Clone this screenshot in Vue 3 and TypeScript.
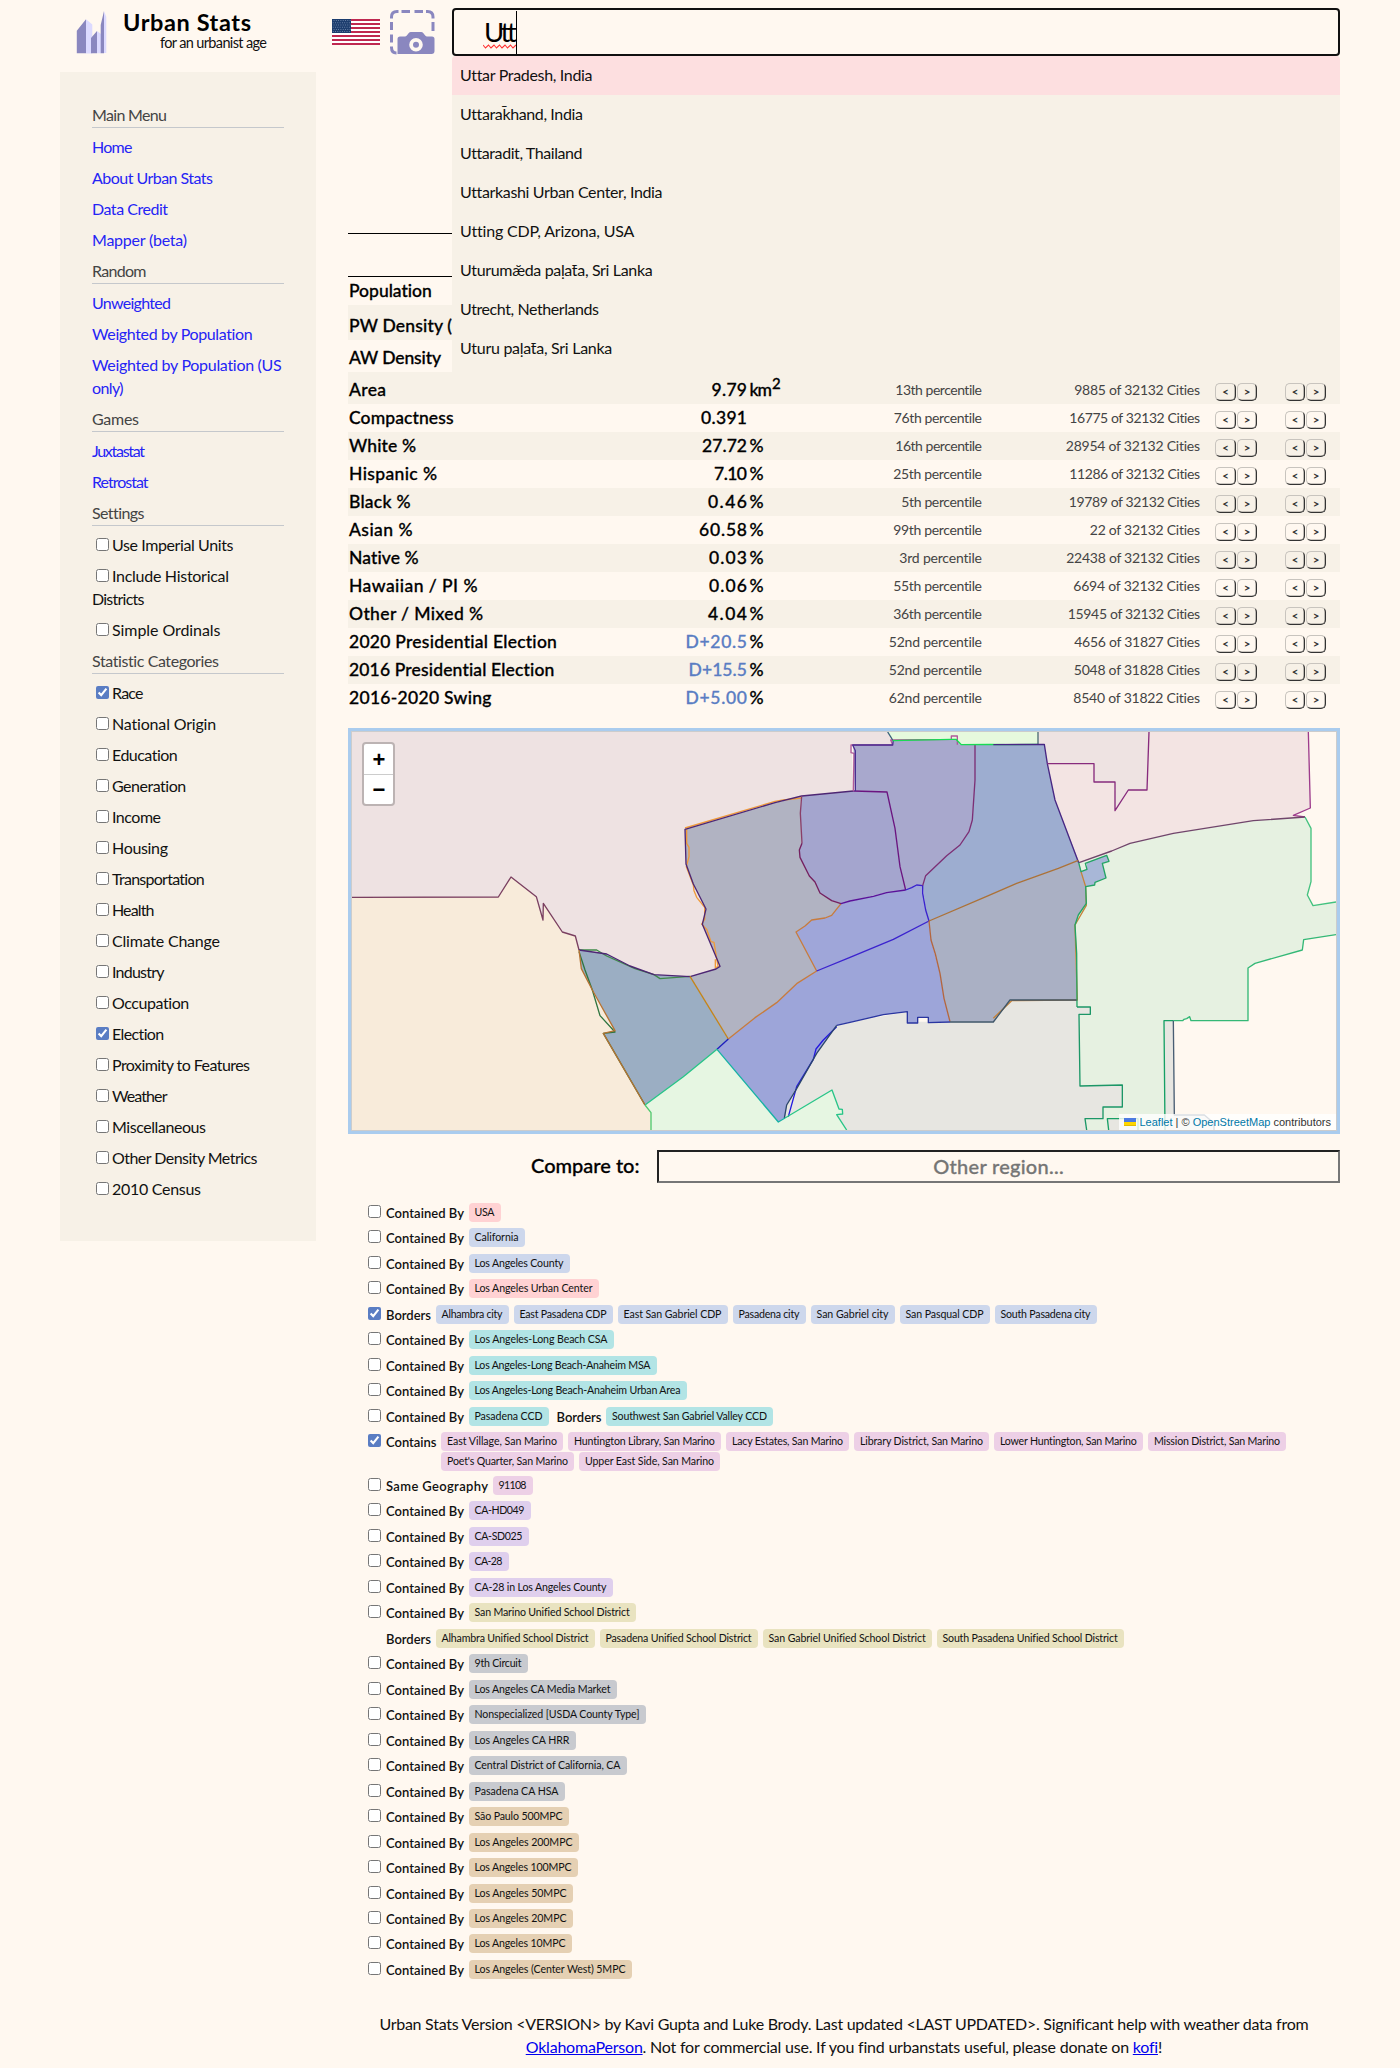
<script setup lang="ts">
import type { Directive } from 'vue'

// Tunes the tracking of a label so that it takes up the given width in pixels.
const vFit: Directive<HTMLElement, number> = {
  mounted(el, binding) {
    const natural = el.getBoundingClientRect().width
    const count = (el.textContent ?? '').trim().length
    if (!binding.value || count < 2) return
    const step = (binding.value - natural) / (count - 1)
    el.style.letterSpacing = `${step.toFixed(3)}px`
    el.style.marginRight = `${(-step).toFixed(3)}px`
  },
}

type Label = [text: string, width: number]
interface Section { title: Label; links?: Label[][]; checks?: { lines: Label[]; on?: boolean }[] }

const check = (text: string, width: number, on = false) => ({ lines: [[text, width]] as Label[], on })

const sections: Section[] = [
  { title: ['Main Menu', 75], links: [[['Home', 40.5]], [['About Urban Stats', 121]], [['Data Credit', 76]], [['Mapper (beta)', 95]]] },
  { title: ['Random', 54.5], links: [[['Unweighted', 79]], [['Weighted by Population', 161]], [['Weighted by Population (US', 190], ['only)', 31.5]]] },
  { title: ['Games', 47], links: [[['Juxtastat', 53]], [['Retrostat', 56.5]]] },
  {
    title: ['Settings', 52],
    checks: [check('Use Imperial Units', 121.5), { lines: [['Include Historical', 117], ['Districts', 52.5]] }, check('Simple Ordinals', 108.5)],
  },
  {
    title: ['Statistic Categories', 127.5],
    checks: [
      check('Race', 31.5, true), check('National Origin', 104.5), check('Education', 66), check('Generation', 74.5),
      check('Income', 49), check('Housing', 56), check('Transportation', 93), check('Health', 42.5),
      check('Climate Change', 108), check('Industry', 52.5), check('Occupation', 77.5), check('Election', 52.5, true),
      check('Proximity to Features', 138), check('Weather', 55.5), check('Miscellaneous', 94),
      check('Other Density Metrics', 145.5), check('2010 Census', 89),
    ],
  },
]

const suggestions: Label[] = [
  ['Uttar Pradesh, India', 132], ['Uttarak\u0304hand, India', 122], ['Uttaradit, Thailand', 122],
  ['Uttarkashi Urban Center, India', 202], ['Utting CDP, Arizona, USA', 174],
  ['Uturumæ\u0306da paḷat\u0304a, Sri Lanka', 192], ['Utrecht, Netherlands', 139], ['Uturu paḷat\u0304a, Sri Lanka', 152],
]

interface Stat { name: Label; value: Label; unit: string; pct: Label; rank: Label; dem?: boolean; h?: number }
const stat = (n: string, nw: number, v: string, vw: number, unit: string, p: string, pw: number, r: string, rw: number): Stat => ({
  name: [n, nw], value: [v, vw], unit, pct: [`${p} percentile`, pw], rank: [`${r} Cities`, rw], dem: v.startsWith('D+'), h: unit === 'km' ? 32 : 28,
})
const stats: Stat[] = [
  stat('Area', 37, '9.79', 35.5, 'km', '13th', 87, '9885 of 32132', 126),
  stat('Compactness', 104.5, '0.391', 46, '', '76th', 88.5, '16775 of 32132', 131),
  stat('White %', 67, '27.72', 45, '%', '16th', 87, '28954 of 32132', 134.5),
  stat('Hispanic %', 88, '7.10', 33, '%', '25th', 89, '11286 of 32132', 131),
  stat('Black %', 61.5, '0.46', 39, '%', '5th', 81, '19789 of 32132', 131.5),
  stat('Asian %', 63.5, '60.58', 48, '%', '99th', 89, '22 of 32132', 110.5),
  stat('Native %', 70, '0.03', 38, '%', '3rd', 83, '22438 of 32132', 134),
  stat('Hawaiian / PI %', 128.5, '0.06', 38, '%', '55th', 89, '6694 of 32132', 127),
  stat('Other / Mixed %', 134, '4.04', 39, '%', '36th', 89, '15945 of 32132', 132.5),
  stat('2020 Presidential Election', 208.5, 'D+20.5', 61.5, '%', '52nd', 93.5, '4656 of 31827', 126),
  stat('2016 Presidential Election', 206, 'D+15.5', 58.5, '%', '52nd', 93.5, '5048 of 31828', 126.5),
  stat('2016-2020 Swing', 142.5, 'D+5.00', 61.5, '%', '62nd', 93.5, '8540 of 31822', 127),
]

type Tone = 'red' | 'blue' | 'teal' | 'pink' | 'purple' | 'olive' | 'gray' | 'tan'
interface Group { label: Label; chips: Label[] }
interface Related { tone: Tone[]; groups: Group[]; on?: boolean; bare?: boolean; tall?: boolean }
const BY: Label = ['Contained By', 78]
const BORDERS: Label = ['Borders', 45]
const by = (tone: Tone, text: string, width: number): Related => ({ tone: [tone], groups: [{ label: BY, chips: [[text, width]] }] })

const related: Related[] = [
  by('red', 'USA', 32), by('blue', 'California', 56), by('blue', 'Los Angeles County', 101), by('red', 'Los Angeles Urban Center', 130),
  {
    tone: ['blue'], on: true,
    groups: [{ label: BORDERS, chips: [['Alhambra city', 73], ['East Pasadena CDP', 99], ['East San Gabriel CDP', 110], ['Pasadena city', 73], ['San Gabriel city', 84], ['San Pasqual CDP', 90], ['South Pasadena city', 102]] }],
  },
  by('teal', 'Los Angeles-Long Beach CSA', 145), by('teal', 'Los Angeles-Long Beach-Anaheim MSA', 188),
  by('teal', 'Los Angeles-Long Beach-Anaheim Urban Area', 218),
  { tone: ['teal'], groups: [{ label: BY, chips: [['Pasadena CCD', 80]] }, { label: BORDERS, chips: [['Southwest San Gabriel Valley CCD', 167]] }] },
  {
    tone: ['pink'], on: true, tall: true,
    groups: [{ label: ['Contains', 50.5], chips: [['East Village, San Marino', 122], ['Huntington Library, San Marino', 153], ['Lacy Estates, San Marino', 123], ['Library District, San Marino', 135], ['Lower Huntington, San Marino', 149], ['Mission District, San Marino', 138], ["Poet's Quarter, San Marino", 133], ['Upper East Side, San Marino', 141]] }],
  },
  { tone: ['pink'], groups: [{ label: ['Same Geography', 102], chips: [['91108', 40]] }] },
  by('purple', 'CA-HD049', 62), by('purple', 'CA-SD025', 60), by('purple', 'CA-28', 40), by('purple', 'CA-28 in Los Angeles County', 144),
  by('olive', 'San Marino Unified School District', 167),
  {
    tone: ['olive'], bare: true,
    groups: [{ label: BORDERS, chips: [['Alhambra Unified School District', 159], ['Pasadena Unified School District', 158], ['San Gabriel Unified School District', 169], ['South Pasadena Unified School District', 187]] }],
  },
  by('gray', '9th Circuit', 59), by('gray', 'Los Angeles CA Media Market', 148), by('gray', 'Nonspecialized [USDA County Type]', 177),
  by('gray', 'Los Angeles CA HRR', 107), by('gray', 'Central District of California, CA', 158), by('gray', 'Pasadena CA HSA', 96),
  by('tan', 'São Paulo 500MPC', 100), by('tan', 'Los Angeles 200MPC', 110), by('tan', 'Los Angeles 100MPC', 109),
  by('tan', 'Los Angeles 50MPC', 104), by('tan', 'Los Angeles 20MPC', 104), by('tan', 'Los Angeles 10MPC', 103),
  by('tan', 'Los Angeles (Center West) 5MPC', 163),
]

// Regions of the map: fill colour and outline.
const regions: [string, string][] = [
  ['#eee2e2', '36,36 1643,36 1658,60 1658,75 1535,75 1540,213 1385,228 1305,248 1035,328 1038,432 1060,492 1098,567 1087,613 1140,739 1128,747 1050,769 942,764 870,738 800,702 717,690 706,648 667,636 610,550 609,600 589,530 513,471 475,531 36,532'],
  ['#f8ebda', '36,532 475,531 513,471 589,530 609,600 610,550 667,636 706,648 717,690 724,746 825,932 790,940 915,1155 933,1178 933,1230 36,1230'],
  ['#e6f6e2', '1131,988 1315,1206 1335,1194 1476,1110 1497,1167 1507,1168 1508,1182 1490,1184 1520,1230 933,1230 933,1178 915,1155'],
  ['#e7e6e1', '1490,916 1530,907 1702,875 1702,905 1960,905 2010,840 2210,840 2211,861 2251,861 2251,883 2217,883 2220,1098 2347,1095 2347,1161 2289,1161 2289,1196 2235,1196 2240,1230 1520,1230 1490,1184 1508,1182 1505,1167 1497,1165 1476,1110 1335,1192 1340,1155 1370,1100 1430,1000'],
  ['#e6f9dd', '1643,36 1658,60 1850,57 1860,74 2094,74 2094,36'],
  ['#eee3e2', '2094,36 2094,72 2113,73 2122,131 2262,131 2262,186 2325,186 2325,272 2365,210 2421,210 2427,36'],
  ['#f3e4e3', '2427,36 2905,36 2911,264 2860,286 2895,291 2740,302 2500,340 2370,370 2315,397 2217,428 2145,240 2122,131 2262,131 2262,186 2325,186 2325,272 2365,210 2421,210'],
  ['#e6f1e1', '2217,428 2315,397 2370,370 2500,340 2740,302 2895,291 2913,325 2913,485 2902,525 2919,557 2988,546 2988,644 2891,659 2887,690 2745,730 2724,744 2724,902 2553,902 2549,890 2540,896 2532,898 2528,902 2472,902 2475,1230 2240,1230 2235,1196 2289,1196 2289,1161 2347,1161 2347,1095 2220,1098 2217,883 2251,883 2251,861 2211,861 2205,615'],
  ['#e7e6e1', '2472,902 2500,902 2503,1185 2593,1185 2622,1210 2622,1230 2475,1230'],
  ['#e7e6e1', '2302,1196 2394,1196 2394,1230 2306,1230'],
  ['#9baec3', '717,690 800,702 870,738 942,764 1050,769 1165,957 1131,988 1030,1070 915,1155 790,940 825,932 724,746'],
  ['#b1b3c2', '1035,328 1305,248 1383,232 1381,280 1386,370 1378,390 1380,412 1408,468 1425,486 1440,519 1475,542 1503,551 1475,586 1455,594 1415,600 1395,618 1368,636 1430,753 1370,791 1310,848 1245,893 1165,957 1050,769 1128,747 1140,739 1087,613 1098,567 1060,492 1038,432'],
  ['#a4a5ce', '1385,228 1540,213 1641,216 1665,325 1680,440 1697,510 1640,518 1600,527 1503,551 1475,542 1440,519 1425,486 1408,468 1380,412 1378,390 1386,370 1381,280'],
  ['#a8a8cd', '1540,75 1658,75 1658,60 1830,58 1850,57 1860,74 1905,74 1905,180 1897,300 1887,335 1860,375 1820,407 1757,467 1748,497 1730,495 1715,503 1697,510 1680,440 1665,325 1641,216 1545,213'],
  ['#9dadd0', '1905,74 2113,73 2122,131 2145,240 2215,421 2155,445 2030,490 1940,529 1767,603 1757,570 1748,497 1757,467 1820,407 1860,375 1887,335 1897,300 1905,180'],
  ['#9fa6d9', '1503,551 1600,527 1640,518 1697,510 1730,495 1748,497 1757,570 1767,603 1660,658 1530,712 1430,753 1368,636 1395,618 1415,600 1455,594 1475,586'],
  ['#9da5d9', '1430,753 1530,712 1660,658 1767,603 1773,660 1800,760 1812,835 1830,905 1765,907 1765,892 1733,892 1733,909 1702,909 1702,875 1630,884 1530,907 1490,916 1430,1000 1370,1100 1340,1155 1335,1192 1315,1206 1131,988 1165,957 1245,893 1310,848 1370,791'],
  ['#aab0c4', '1767,603 1940,529 2030,490 2155,445 2215,421 2237,500 2239,550 2215,585 2205,615 2210,840 2010,840 1960,905 1830,905 1812,835 1800,760 1773,660'],
  ['#a8b7d7', '2240,427 2300,406 2307,424 2287,430 2298,474 2265,487 2264,495 2237,500 2223,455 2241,448'],
]

// Boundary lines: stroke colour and path points.
const lines: [string, string][] = [
  ['#3f8a4a', '717,690 770,690 800,708 885,746 942,764 960,776 1050,769'],
  ['#2f7540', '717,695 735,750 757,810 780,887 825,936 790,940 915,1155'],
  ['#f09a3a', '1035,324 1305,244 1330,240 1383,234'],
  ['#f09a3a', '1040,328 1040,370 1047,382 1047,410 1039,440 1060,495 1062,512 1070,532 1094,562 1094,598 1085,612 1100,628 1113,665 1122,667 1134,739 1126,744 1126,718'],
  ['#7a3f60', '36,532 475,531 513,471 589,530 609,600 610,550 667,636 706,648 717,690'],
  ['#4d2673', '717,690 800,702 870,738 942,764 1050,770 1128,747 1140,739 1087,613 1098,567 1060,492 1038,432 1035,328 1305,248 1385,228 1540,213'],
  ['#b57232', '717,690 724,746 757,810 825,932 790,940 915,1155'],
  ['#c58418', '1050,769 1165,957'],
  ['#c77b3d', '1165,957 1245,893 1310,848 1370,791 1430,753 1368,636 1395,618 1415,600 1455,594 1475,586 1503,551'],
  ['#8a3f68', '1385,228 1381,280 1386,370'],
  ['#74205f', '1386,370 1378,390 1380,412 1408,468 1425,486 1440,519 1475,542 1503,551'],
  ['#6b1580', '1540,213 1641,216 1665,325 1680,440 1697,510'],
  ['#5a1199', '1503,551 1530,543 1600,529 1640,518 1697,510'],
  ['#3a22ce', '1697,510 1715,503 1730,495 1748,497 1748,520 1757,570 1767,603 1660,658 1530,712 1430,753'],
  ['#7c2f75', '1905,74 1905,180 1897,300 1887,335 1860,375 1820,407 1757,467 1748,497'],
  ['#b05a99', '1540,213 1542,100 1533,98 1533,75 1658,75 1652,60 1834,58 1834,48 1852,48 1852,74'],
  ['#4a2e92', '1546,213 1546,92 1538,75 1658,75 1660,60'],
  ['#19db54', '1658,62 1834,58 1848,58 1864,74 1950,73 2000,74 2094,73'],
  ['#38607a', '1643,36 1658,60'],
  ['#4c6b74', '2094,36 2094,73'],
  ['#472783', '1960,74 2113,73 2122,131 2145,240 2216,428'],
  ['#872b7d', '2122,131 2262,131 2262,186 2325,186 2325,272 2365,210 2421,210 2427,36'],
  ['#9d3b8c', '2905,36 2911,264 2860,286 2895,291'],
  ['#70456b', '2217,428 2315,393 2370,370 2500,340 2740,302 2895,291'],
  ['#ab7137', '2215,421 2155,445 2030,490 1940,529 1767,603'],
  ['#b3663f', '1767,603 1773,660 1786,702 1800,760 1812,835 1830,905'],
  ['#c58238', '2223,455 2237,500 2239,556 2205,615 2212,840 2015,842 1960,895'],
  ['#24a465', '2216,428 2223,455 2241,448 2236,430 2300,406 2307,424 2287,430 2298,474 2265,487 2264,495 2237,500 2239,550 2215,585 2205,615 2210,700 2211,861'],
  ['#1c9767', '2211,861 2251,861 2251,883 2217,883 2220,1098 2347,1095 2347,1161 2289,1161 2289,1196 2235,1196 2240,1230'],
  ['#43c27f', '2895,291 2913,325 2913,485 2902,525 2919,557 2988,546'],
  ['#34b876', '2988,644 2891,659 2887,690 2745,730 2724,744 2724,902 2553,902 2549,890 2540,896 2532,898 2528,902 2500,902'],
  ['#16a065', '2306,1230 2302,1196 2394,1196 2394,1230'],
  ['#16a065', '2500,902 2472,902 2475,1230'],
  ['#485d73', '2500,902 2503,1185 2593,1185 2622,1210 2622,1230'],
  ['#3f5668', '2210,840 2010,840 1960,906 1830,906'],
  ['#2a36a0', '1830,906 1765,908 1765,892 1733,892 1733,909 1702,909 1702,875 1630,884 1530,907 1490,916'],
  ['#2318e0', '1490,920 1450,960 1428,987 1420,1018 1370,1100 1345,1190'],
  ['#2b466c', '1490,916 1430,1000 1370,1106 1340,1155 1333,1195'],
  ['#1e1fbd', '1131,988 1165,957'],
  ['#17b2a4', '1131,988 1315,1206 1335,1194'],
  ['#28c588', '1131,988 1030,1070 915,1155'],
  ['#28c588', '1335,1194 1476,1110 1497,1167 1507,1168 1508,1182 1490,1184 1520,1230'],
  ['#50c96f', '915,1155 933,1178 933,1230'],
]
</script>

<template>
  <div class="page">
    <header class="top">
      <svg class="logo" viewBox="0 0 32 44" width="32" height="44">
        <path fill="#dcdaff" d="M10 9.3l6.3 5.2v29H10zM21 21l4 3v19.300h-4zM28 1l2.300 6v36H28z" />
        <path fill="#8a87bf" d="M.8 20.700L10 9.300v34H.8zM15 28l6-7v22.300h-6zM24.700 15L28 1v42.300h-3.300z" />
      </svg>
      <div class="brand">
        <div class="brand-name"><span v-fit="128">Urban Stats</span></div>
        <div class="brand-sub"><span v-fit="107">for an urbanist age</span></div>
      </div>
      <svg class="flag" viewBox="0 0 48 26" width="48" height="26">
        <rect width="48" height="26" fill="#fff" />
        <rect v-for="n in 7" :key="n" width="48" height="2" :y="(n - 1) * 4" fill="#bf2850" />
        <rect width="19" height="14" fill="#1c3d6e" />
        <g fill="#8fa3c2">
          <template v-for="r in 6" :key="r">
            <rect v-for="c in 8" :key="c" :x="c * 2.300 - 1.500 + (r % 2) * 0.8" :y="r * 2.200 - 1" width="0.8" height="0.8" />
          </template>
        </g>
      </svg>
      <svg class="camera" viewBox="0 0 45 45" width="45" height="45">
        <path fill="none" stroke="#8a87bf" stroke-width="3" d="M1.500 8.500V7q0-5.500 5.500-5.500h1.500M11.500 1.500h8.500M24.500 1.500h8.500M36 1.500h1.500q5.500 0 5.500 5.500v1.500M43 12v9M1.500 12v8M1.500 24.500v8M1.500 36.500v1q0 5.500 5 5.500" />
        <path fill="#8a87bf" d="M7.500 44V29q0-2.500 2.500-2.500h5q1 0 1.800-1l2-2.500q.8-1 2-1h10.400q1.200 0 2 1l2 2.500q.8 1 1.800 1h5q2.500 0 2.500 2.500v12q0 3-3 3z" />
        <circle cx="26" cy="34.800" r="4.900" fill="none" stroke="#fff8f0" stroke-width="3.800" />
      </svg>
      <div class="search">
        <span class="typed"><span v-fit="32">Utt</span></span>
        <svg class="squiggle" viewBox="0 0 33 5" width="33" height="5"><path d="M0 1l2.500 3L5.500 1l2.500 3L11 1l2.500 3L16.500 1l2.500 3L22 1l2.500 3L27.500 1l2.500 3L33 1" fill="none" stroke="#f33" stroke-width="1.100" /></svg>
        <div class="dropdown">
          <div v-for="(s, i) in suggestions" :key="s[0]" class="option" :class="{ active: i === 0 }"><span v-fit="s[1]">{{ s[0] }}</span></div>
        </div>
      </div>
    </header>

    <div class="columns">
      <nav class="side">
        <template v-for="sec in sections" :key="sec.title[0]">
          <div class="heading"><span v-fit="sec.title[1]">{{ sec.title[0] }}</span></div>
          <div v-for="l in sec.links" :key="l[0][0]" class="item link">
            <div v-for="t in l" :key="t[0]"><span v-fit="t[1]">{{ t[0] }}</span></div>
          </div>
          <div v-for="c in sec.checks" :key="c.lines[0][0]" class="item">
            <div v-for="(t, i) in c.lines" :key="t[0]" class="check-line"><input v-if="i === 0" type="checkbox" :checked="c.on"><span v-fit="t[1]">{{ t[0] }}</span></div>
          </div>
        </template>
      </nav>

      <main class="content">
        <div class="title-gap"></div>
        <div class="table-head"></div>
        <div class="row covered pop"><span v-fit="83">Population</span></div>
        <div class="row covered pw"><span v-fit="103">PW Density (</span></div>
        <div class="row covered aw"><span v-fit="92">AW Density</span></div>
        <div v-for="s in stats" :key="s.name[0]" class="row stat" :style="{ height: s.h + 'px' }">
          <div class="name"><span v-fit="s.name[1]">{{ s.name[0] }}</span></div>
          <div class="value" :class="{ dem: s.dem }"><span v-fit="s.value[1]">{{ s.value[0] }}</span></div>
          <div class="unit"><span v-if="s.unit === 'km'"><span v-fit="22.5">km</span><sup>2</sup></span><span v-else>{{ s.unit }}</span></div>
          <div class="small"><span v-fit="s.pct[1]">{{ s.pct[0] }}</span></div>
          <div class="small"><span v-fit="s.rank[1]">{{ s.rank[0] }}</span></div>
          <div class="pair first"><button>&lt;</button><button>&gt;</button></div>
          <div class="pair"><button>&lt;</button><button>&gt;</button></div>
        </div>

        <div class="map">
          <svg class="shapes" viewBox="36 36 2952 1194" width="984" height="398" preserveAspectRatio="none">
            <polygon v-for="(r, i) in regions" :key="i" :fill="r[0]" :points="r[1]" />
            <polyline v-for="(l, i) in lines" :key="'l' + i" fill="none" :stroke="l[0]" stroke-width="4" stroke-linejoin="round" :points="l[1]" />
          </svg>
          <div class="zoom"><div>+</div><div>−</div></div>
          <div class="credit">
            <svg viewBox="0 0 12 8" width="12" height="8"><path fill="#4c7be1" d="M0 0h12v4H0z" /><path fill="#ffd500" d="M0 4h12v3H0z" /><path fill="#e0bc00" d="M0 7h12v1H0z" /></svg>
            <span v-fit="191.5"><a>Leaflet</a> | © <a>OpenStreetMap</a> contributors</span>
          </div>
        </div>

        <div class="compare">
          <div class="compare-label"><span v-fit="108.5">Compare to:</span></div>
          <div class="compare-input"><span v-fit="130.5">Other region...</span></div>
        </div>

        <div class="related">
          <div v-for="(r, i) in related" :key="i" class="rel-row" :class="[r.tone[0], { tall: r.tall }]">
            <input type="checkbox" :checked="r.on" :class="{ hidden: r.bare }">
            <div v-for="g in r.groups" :key="g.label[0]" class="rel-group">
              <div class="rel-label" :style="{ width: g.label[1] + 'px' }"><span v-fit="g.label[1]">{{ g.label[0] }}</span></div>
              <div class="chips">
                <div v-for="c in g.chips" :key="c[0]" class="chip" :style="{ width: c[1] + 'px' }"><span v-fit="c[1] - 12">{{ c[0] }}</span></div>
              </div>
            </div>
          </div>
        </div>

        <footer class="foot">
          <div><span v-fit="929">Urban Stats Version &lt;VERSION&gt; by Kavi Gupta and Luke Brody. Last updated &lt;LAST UPDATED&gt;. Significant help with weather data from</span></div>
          <div><span v-fit="636"><a>OklahomaPerson</a>. Not for commercial use. If you find urbanstats useful, please donate on <a>kofi</a>!</span></div>
        </footer>
      </main>
    </div>
  </div>
</template>

<style>
body { margin: 0; background: #fff8f0; }
</style>

<style scoped>
* { box-sizing: border-box; }
.page { width: 1400px; height: 2068px; overflow: hidden; background: #fff8f0; color: #111; font: 16px/23px Lato, "Open Sans", sans-serif; }
.page span { white-space: nowrap; }
input { width: 13px; height: 13px; accent-color: #5a7dc3; }

.top { display: flex; height: 72px; padding-left: 76px; }
.logo { margin-top: 10px; }
.brand { width: 224px; padding-left: 15px; }
.brand-name { margin-top: 5px; height: 34px; font-size: 23.500px; line-height: 34px; font-weight: 700; color: #000; }
.brand-sub { padding-left: 37px; font-size: 14.500px; line-height: 20px; margin-top: -6px; }
.flag { margin-top: 19px; }
.camera { margin: 10px 0 0 10px; }
.search { position: relative; width: 888px; height: 48px; margin: 8px 0 0 17px; border: 2px solid #101010; border-radius: 4px; }
.typed { display: block; width: 33px; height: 43px; margin: 1px 0 0 30px; border-right: 1px solid #000; font-size: 27.500px; line-height: 42px; color: #000; }
.squiggle { position: absolute; left: 29px; top: 34px; }
.dropdown { position: absolute; z-index: 2; left: -2px; top: 46px; width: 888px; height: 318px; background: #f7f1e7; border-radius: 4px 4px 0 0; overflow: hidden; }
.option { height: 39px; padding-left: 8px; line-height: 38px; }
.option.active { background: #fddfe0; }

.columns { display: flex; align-items: flex-start; padding-left: 60px; }
.side { width: 256px; height: 1169px; padding: 32px; background: #f7f1e7; line-height: 21px; }
.heading { height: 24px; border-bottom: 1px solid #c5c8cc; margin-bottom: 8px; color: #444; }
.item { margin-bottom: 8px; }
.item > div { height: 23px; }
.link { color: #2524f5; }
.check-line input { vertical-align: top; margin: 4px 3px 0 4px; }

.content { width: 992px; margin-left: 32px; }
.title-gap { height: 162px; border-bottom: 1px solid #000; }
.table-head { height: 43px; border-bottom: 1px solid #000; }
.row { font-size: 17.500px; font-weight: 500; color: #000; -webkit-text-stroke: 0.3px; }
.covered { padding-left: 1px; width: 104px; overflow: hidden; }
.pop { height: 28px; line-height: 28px; }
.pw { height: 35px; line-height: 42px; background: #f7f1e7; }
.aw { height: 32px; line-height: 36px; }
.stat { display: grid; grid-template-columns: 250px 149px 60px 175px 218px 85px 55px; align-items: end; line-height: 28px; }
.stat:nth-child(even) { background: #f7f1e7; }
.name { padding-left: 1px; }
.value { text-align: right; }
.dem { color: #5a7dc3; }
.unit { padding-left: 2.500px; height: 28px; }
sup { font-size: 15px; line-height: 0; vertical-align: 7px; }
.small { text-align: right; font-size: 14px; font-weight: 400; color: #444; height: 28px; -webkit-text-stroke: 0; }
.pair { display: flex; gap: 1px; height: 21px; -webkit-text-stroke: 0; }
.pair.first { padding-left: 15px; }
button { width: 20px; height: 18px; padding: 0; border: 1px solid; border-color: #c8c4be #333 #333 #c8c4be; border-radius: 5px; background: transparent; font: 700 11.500px/14px Lato, sans-serif; color: #333; box-shadow: inset -0.3px -0.3px 0 #333; }
.pair.first button:first-child { width: 21px; }

.map { position: relative; width: 992px; height: 406px; margin-top: 16px; border: 3px solid #aaccee; padding: 1px; background: #ccc; }
.shapes { display: block; background: #fff8f0; }
.zoom { position: absolute; left: 11px; top: 11px; width: 33px; height: 64px; border: 2px solid #bcb3b3; border-radius: 4px; background: #fff; color: #000; font: 700 22px/30px "Liberation Sans", Arial, sans-serif; text-align: center; }
.zoom div { height: 30px; padding-left: 1px; }
.zoom div:first-child { height: 31px; border-bottom: 1px solid #ccc; line-height: 32px; }
.credit { position: absolute; right: 1px; bottom: 1px; display: flex; align-items: center; gap: 3px; height: 16px; padding: 0 5px; background: rgba(255, 255, 255, 0.8); font: 11px/16px "Liberation Sans", Arial, sans-serif; color: #333; white-space: nowrap; }
.credit a { color: #0078a8; }

.compare { display: flex; height: 33px; margin-top: 16px; font-size: 20px; font-weight: 500; line-height: 31px; color: #000; -webkit-text-stroke: 0.3px; }
.compare-label { width: 309px; padding-left: 183px; }
.compare-input { flex: 1; border: 2px solid; border-color: #222 #767676 #767676 #222; line-height: 28px; text-align: center; color: #757575; }

.related { padding: 20px 0 0 20px; height: 785px; }
.rel-row { display: flex; height: 25.470px; }
.rel-row.tall { height: 43.800px; }
.rel-row input { margin: 2px 5px 0 0; flex: none; }
.hidden { visibility: hidden; }
.rel-group { display: flex; margin-right: 8px; }
.rel-label { margin-right: 4.500px; font-size: 13px; line-height: 20px; font-weight: 600; color: #111; }
.chips { display: flex; flex-wrap: wrap; gap: 1px 5px; width: max-content; max-width: 880px; align-content: flex-start; }
.chip { height: 19px; padding-left: 6px; border-radius: 4px; font-size: 10.600px; line-height: 19px; }
.red .chip { background: #ffd2d3; }
.blue .chip { background: #cdd7ec; }
.teal .chip { background: #b2e4e5; }
.pink .chip { background: #edd0e6; }
.purple .chip { background: #dfcfed; }
.olive .chip { background: #e9e3c0; }
.gray .chip { background: #c8cacf; }
.tan .chip { background: #e5d0b3; }

.foot { margin-top: 44px; text-align: center; }
.foot a { color: #0000ee; text-decoration: underline; }
</style>
